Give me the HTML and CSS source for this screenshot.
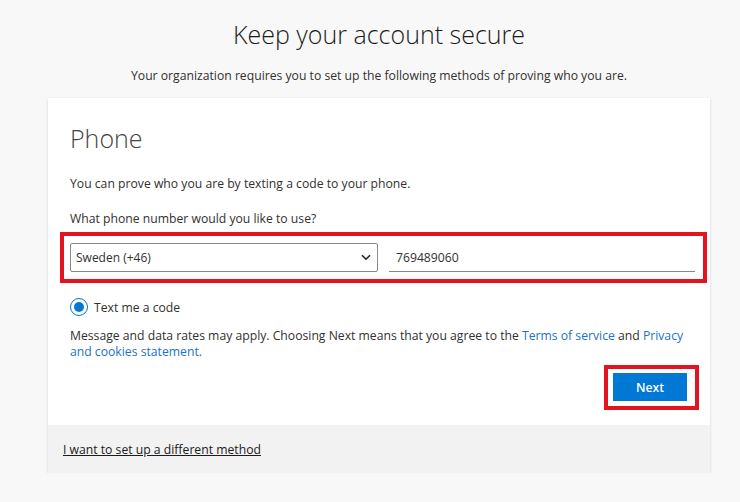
FILE: index.html
```html
<!DOCTYPE html>
<html lang="en">
<head>
    <meta charset="UTF-8">
    <title>Keep your account secure</title>
    <link rel="stylesheet" href="styles.css">
</head>
<body>
    <div class="page">
        <h1 class="title">Keep your account secure</h1>
        <p class="subtitle">Your organization requires you to set up the following methods of proving who you are.</p>

        <div class="card">
            <div class="card-body">
                <h2 class="method">Phone</h2>
                <p class="intro">You can prove who you are by texting a code to your phone.</p>
                <p class="question">What phone number would you like to use?</p>

                <div class="mark phone-row">
                    <div class="select">
                        <span>Sweden (+46)</span>
                        <svg width="10" height="7" viewBox="0 0 10 7"><path d="M1 1.2 5 5.2 9 1.2" fill="none" stroke="#222" stroke-width="1.6"/></svg>
                    </div>
                    <div class="number">769489060</div>
                </div>

                <div class="option">
                    <span class="radio"><span class="dot"></span></span>
                    <span>Text me a code</span>
                </div>

                <p class="notice">Message and data rates may apply. Choosing Next means that you agree to the <a href="#">Terms of service</a> and <a href="#">Privacy and cookies statement.</a></p>

                <div class="actions">
                    <div class="mark next-mark">
                        <button class="next">Next</button>
                    </div>
                </div>
            </div>
            <div class="card-foot">
                <a href="#">I want to set up a different method</a>
            </div>
        </div>
    </div>
</body>
</html>
```

FILE: styles.css
```css
body {
    margin: 0;
    background: #f8f8f8;
    font-family: "Open Sans", "Noto Sans", sans-serif;
    color: #323130;
}
.page {
    width: 662px;
    margin-left: 48px;
    padding-top: 16px;
}
.title {
    margin: 0;
    text-align: center;
    font-size: 25px;
    font-weight: 300;
    line-height: 36px;
    color: #1b1b1b;
}
.subtitle {
    margin: 15px 0 0;
    text-align: center;
    font-size: 12.2px;
    line-height: 18px;
}
.card {
    margin-top: 13px;
    background: #fff;
    box-shadow: 0 1px 3px rgba(0, 0, 0, 0.14);
}
.card-body {
    padding: 22px 22px 15px;
}
.method {
    margin: 0;
    font-size: 25px;
    font-weight: 300;
    line-height: 36px;
    color: #444;
}
.intro,
.question,
.notice {
    margin: 0;
    font-size: 12.2px;
    line-height: 17px;
}
.intro {
    margin-top: 19px;
}
.question {
    margin-top: 18px;
}
.mark {
    border: 4px solid #e3131f;
}
.phone-row {
    display: flex;
    gap: 11px;
    margin: 5px -19px 0 -10px;
    padding: 7px 8px 7px 6px;
}
.select {
    box-sizing: border-box;
    width: 308px;
    height: 29px;
    padding: 0 6px 0 5px;
    display: flex;
    align-items: center;
    justify-content: space-between;
    border: 1px solid #8a8886;
    border-radius: 2px;
    font-size: 12px;
}
.number {
    flex: 1;
    box-sizing: border-box;
    height: 29px;
    padding: 0 7px;
    display: flex;
    align-items: center;
    border-bottom: 1px solid #8a8886;
    font-size: 12.2px;
}
.option {
    display: flex;
    align-items: center;
    gap: 6px;
    margin-top: 15px;
    font-size: 12.2px;
}
.radio {
    box-sizing: border-box;
    width: 18px;
    height: 18px;
    border: 1.5px solid #0078d4;
    border-radius: 50%;
    display: flex;
    align-items: center;
    justify-content: center;
}
.dot {
    width: 10px;
    height: 10px;
    border-radius: 50%;
    background: #0078d4;
}
.notice {
    margin-top: 12px;
    line-height: 16px;
}
.notice a {
    color: #1a73c7;
    text-decoration: none;
}
.actions {
    display: flex;
    justify-content: flex-end;
    margin-top: 5px;
    margin-right: -11px;
}
.next-mark {
    padding: 4px 8px 5px 5px;
}
.next {
    width: 74px;
    height: 28px;
    border: none;
    background: #0078d4;
    color: #fff;
    font-family: inherit;
    font-size: 12.2px;
    font-weight: 600;
}
.card-foot {
    height: 48px;
    padding-left: 15px;
    display: flex;
    align-items: center;
    background: #f2f2f2;
}
.card-foot a {
    color: #1b1b1b;
    font-size: 12.2px;
}
```
